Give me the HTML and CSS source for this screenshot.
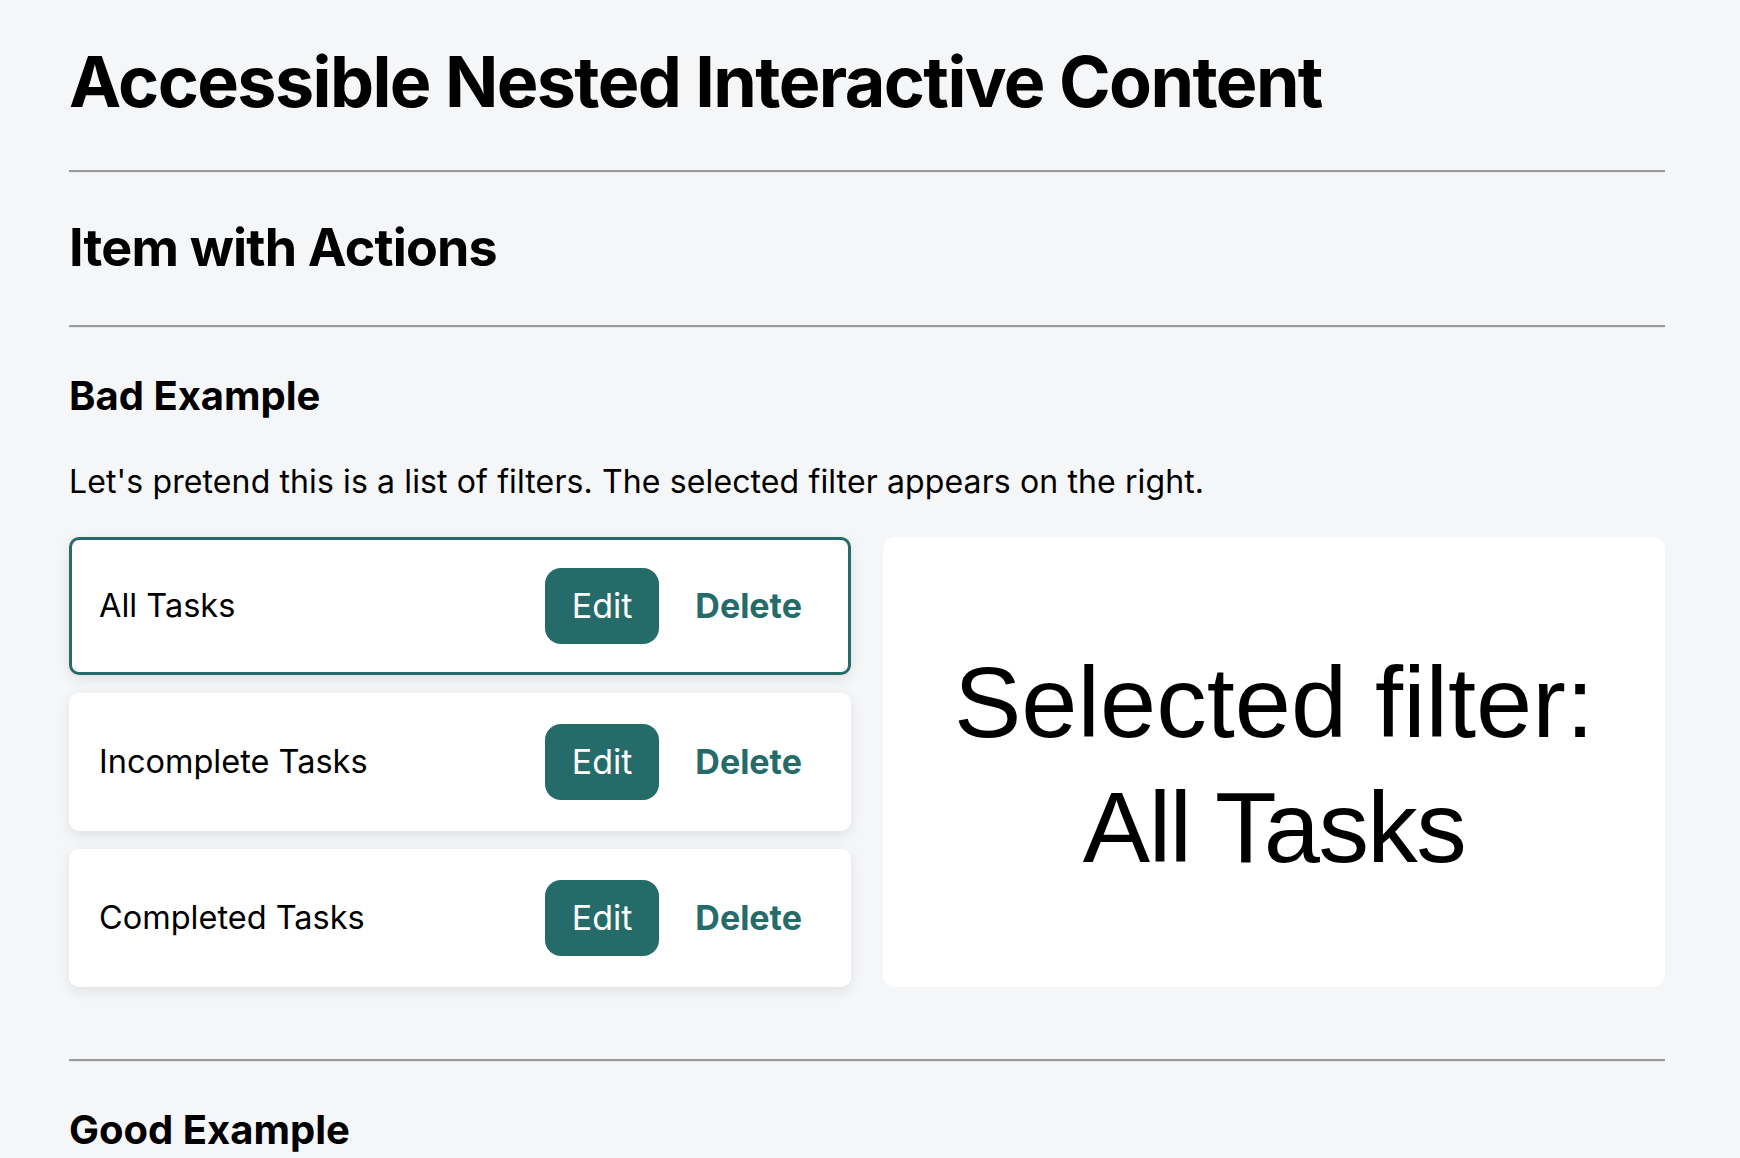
FILE: index.html
```html
<!DOCTYPE html>
<html lang="en">
<head>
<meta charset="utf-8">
<title>Accessible Nested Interactive Content</title>
<link rel="stylesheet" href="styles.css">
</head>
<body>
<main class="page">
  <h1 class="page-title">Accessible Nested Interactive Content</h1>
  <hr class="rule">
  <section class="pattern">
    <h2 class="pattern-title">Item with Actions</h2>
    <hr class="rule">
    <div class="example">
      <h3 class="example-title">Bad Example</h3>
      <p class="example-text">Let's pretend this is a list of filters. The selected filter appears on the right.</p>
      <div class="demo">
        <ul class="filter-list">
          <li class="filter-card is-selected">
            <span class="filter-name">All Tasks</span>
            <div class="filter-actions">
              <button class="btn btn-primary" type="button">Edit</button>
              <button class="btn btn-link" type="button">Delete</button>
            </div>
          </li>
          <li class="filter-card">
            <span class="filter-name">Incomplete Tasks</span>
            <div class="filter-actions">
              <button class="btn btn-primary" type="button">Edit</button>
              <button class="btn btn-link" type="button">Delete</button>
            </div>
          </li>
          <li class="filter-card">
            <span class="filter-name">Completed Tasks</span>
            <div class="filter-actions">
              <button class="btn btn-primary" type="button">Edit</button>
              <button class="btn btn-link" type="button">Delete</button>
            </div>
          </li>
        </ul>
        <div class="selected-panel">
          <p class="selected-text"><span class="selected-label">Selected filter:</span><br><span class="selected-value">All Tasks</span></p>
        </div>
      </div>
    </div>
    <hr class="rule">
    <div class="example">
      <h3 class="example-title">Good Example</h3>
    </div>
  </section>
</main>
</body>
</html>
```

FILE: styles.css
```css
* {
  box-sizing: border-box;
}

html, body {
  margin: 0;
  padding: 0;
}

body {
  background: #f5f6f8;
  color: #000;
  font-family: Inter, "Noto Sans", sans-serif;
}

.page {
  padding: 40px 75px 0 69px;
}

.page-title {
  margin: 0;
  font-size: 70px;
  line-height: 1.2;
  font-weight: 700;
  letter-spacing: -1.6px;
}

.rule {
  height: 0;
  margin: 46px 0 44px;
  border: 0;
  border-top: 2px solid #9b9b9b;
  border-bottom: 1px solid #e8e9eb;
}

.pattern-title {
  margin: 2px 0 0;
  font-size: 52px;
  line-height: 1.2;
  font-weight: 700;
  letter-spacing: -0.8px;
}

.example-title {
  margin: 0;
  font-size: 40px;
  line-height: 1.2;
  font-weight: 700;
}

.example-text {
  margin: 38px 0 31px;
  font-size: 32px;
  line-height: 1.5;
  letter-spacing: 0.12px;
}

.demo {
  display: grid;
  grid-template-columns: 1fr 1fr;
  gap: 32px;
  margin-bottom: 72px;
}

.filter-list {
  list-style: none;
  margin: 0;
  padding: 0;
  display: flex;
  flex-direction: column;
  gap: 18px;
}

.filter-card {
  display: flex;
  align-items: center;
  padding: 28px 19px 28px 27px;
  background: #fff;
  border: 3px solid transparent;
  border-radius: 10px;
  box-shadow: 0 4px 14px rgba(0, 0, 0, 0.09);
}

.filter-card.is-selected {
  border-color: #246b6a;
}

.filter-name {
  flex: 1;
  font-size: 32.5px;
  line-height: 40px;
}

.filter-actions {
  display: flex;
  align-items: center;
  gap: 9px;
}

.btn {
  font-family: Inter, "Noto Sans", sans-serif;
  font-size: 34px;
  line-height: 40px;
  padding: 18px 27px;
  border: 0;
  border-radius: 16px;
  cursor: pointer;
}

.btn-primary {
  background: #246b6a;
  color: #fff;
  font-weight: 400;
}

.btn-link {
  background: transparent;
  color: #246b6a;
  font-weight: 700;
}

.selected-panel {
  display: flex;
  align-items: center;
  justify-content: center;
  padding-top: 5px;
  background: #fff;
  border-radius: 12px;
}

.selected-text {
  margin: 0;
  text-align: center;
  font-family: "Liberation Sans", Arial, sans-serif;
  font-size: 101px;
  line-height: 125px;
}

.selected-value {
  letter-spacing: -1.6px;
}
```
